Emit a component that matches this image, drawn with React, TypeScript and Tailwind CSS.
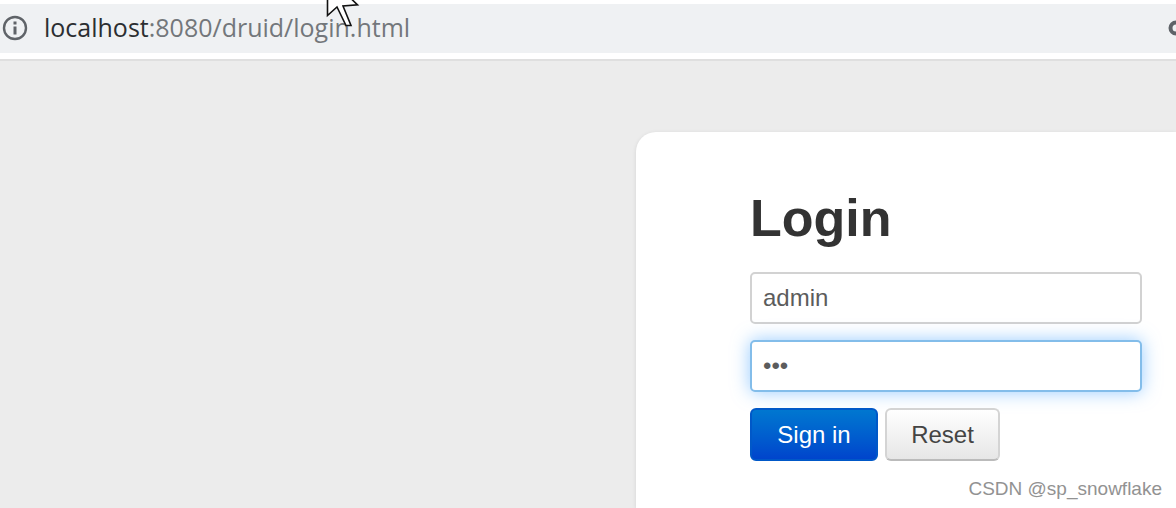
const inputClass =
  "block h-[52px] w-full rounded-[5px] border-2 bg-white px-[11px] text-2xl text-[#5c5c5c] outline-none";

const buttonClass = "h-[53px] rounded-md border-2 text-2xl";

function InfoIcon() {
  return (
    <svg viewBox="0 0 26 26" className="size-[26px] shrink-0" aria-hidden="true">
      <circle cx="13" cy="13" r="11" fill="none" stroke="#5f6368" strokeWidth="2.4" />
      <rect x="11.5" y="6.5" width="3" height="3" fill="#5f6368" />
      <rect x="11.5" y="11.5" width="3" height="8" fill="#5f6368" />
    </svg>
  );
}

function KeyIcon() {
  return (
    <svg viewBox="0 0 28 16" className="h-4 w-7 shrink-0" aria-hidden="true">
      <circle cx="8" cy="8" r="5.5" fill="none" stroke="#5f6368" strokeWidth="4" />
      <path d="M14 6h13v4h-2v4h-4v-4h-7z" fill="#5f6368" />
    </svg>
  );
}

function Cursor() {
  return (
    <svg viewBox="0 0 34 28" className="absolute left-[326px] top-0 h-7 w-[34px]" aria-hidden="true">
      <path
        d="M1.5 -24V15.5L11 7L20 25.5H25L17 6L31.5 4.8Z"
        fill="#fff"
        stroke="#111"
        strokeWidth="1.6"
      />
    </svg>
  );
}

/* address bar */
function AddressBar() {
  return (
    <header className="relative overflow-hidden border-b-2 border-[#dfdfdf] bg-white pt-1 pb-1.5">
      <div className="flex h-[49px] items-center bg-[#eff1f3] pb-0.5 pl-0.5">
        <InfoIcon />
        <p className="ml-4 flex-1 whitespace-nowrap pb-0.5 font-['Open_Sans',sans-serif] text-[25px] leading-8 text-[#73777b]">
          <span className="text-[#2b2e31]">localhost</span>:8080/druid/login.html
        </p>
        <div className="-mr-5">
          <KeyIcon />
        </div>
      </div>
      <Cursor />
    </header>
  );
}

/* login form */
function LoginForm() {
  return (
    <form className="w-[392px]" onSubmit={(e) => e.preventDefault()}>
      <h1 className="text-[52px] leading-[80px] font-bold text-[#333]">Login</h1>
      <input
        type="text"
        aria-label="Username"
        defaultValue="admin"
        className={`${inputClass} mt-[14px] border-[#d2d2d2]`}
      />
      <input
        type="password"
        aria-label="Password"
        defaultValue="abc"
        className={`${inputClass} mt-4 border-[#83bdea] shadow-[0_0_18px_rgba(82,168,255,0.6)]`}
      />
      <div className="mt-4 flex gap-[7px]">
        <button
          type="submit"
          className={`${buttonClass} w-32 border-[#0058c8] bg-linear-to-b from-[#0077d0] to-[#0044cc] text-white`}
        >
          Sign in
        </button>
        <button
          type="reset"
          className={`${buttonClass} w-[115px] border-[#d4d4d4] border-b-[#bbb] bg-linear-to-b from-white to-[#e6e6e6] text-[#444]`}
        >
          Reset
        </button>
      </div>
    </form>
  );
}

export default function App() {
  return (
    <div className="relative flex min-h-screen flex-col overflow-hidden bg-[#ececec] font-['Liberation_Sans',Arial,sans-serif]">
      <AddressBar />
      <main className="flex flex-1 pt-[71px]">
        <section className="ml-auto w-[540px] rounded-tl-[20px] bg-white pt-[46px] pl-[114px] shadow-[0_1px_4px_rgba(0,0,0,0.1)]">
          <LoginForm />
        </section>
      </main>
      <p className="absolute right-[14px] bottom-[7px] text-[19px] leading-6 text-[#929292]">
        CSDN @sp_snowflake
      </p>
    </div>
  );
}
